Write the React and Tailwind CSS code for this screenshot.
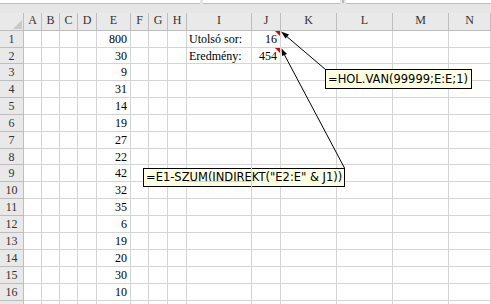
import React from "react";

const cols = ["", "A", "B", "C", "D", "E", "F", "G", "H", "I", "J", "K", "L", "M", "N"];
const eVals = [800, 30, 9, 31, 14, 19, 27, 22, 42, 32, 35, 6, 19, 20, 30, 10];
const gridCols =
  "grid grid-cols-[24px_18px_18px_18px_19px_34px_18px_19px_19px_65px_29px_56px_56px_56px_1fr]";

function Row({ n }) {
  const h = n === 2 || n === 8 ? "h-[16px]" : "h-[17px]";
  const cells = [];
  for (let c = 0; c < cols.length; c++) {
    let content = null;
    let cls = `${h} border-r border-b border-[#d4d4d4] leading-[16px] overflow-visible whitespace-nowrap`;
    if (c === 0) {
      cls = `${h} border-r border-b border-[#bdbdbd] bg-[#e9e9e9] text-[#333] text-center leading-[16px]`;
      content = n;
    } else if (cols[c] === "E") {
      cls += " text-right pr-[3px]";
      content = eVals[n - 1];
    } else if (cols[c] === "I") {
      cls += " pl-[2px] relative z-10";
      if (n === 1) content = "Utolsó sor:";
      if (n === 2) content = "Eredmény:";
    } else if (cols[c] === "J") {
      cls += " text-right pr-[3px]";
      if (n === 1) content = 16;
      if (n === 2) content = 454;
    }
    cells.push(
      <div key={c} className={cls}>
        {content}
      </div>
    );
  }
  return <>{cells}</>;
}

export default function App() {
  return (
    <div className="relative w-[491px] h-[304px] overflow-hidden bg-white text-[12px] text-black font-['Liberation_Serif',serif]">
      {/* formula bar remnant */}
      <div className="h-[13px] bg-[#e6e6e6] flex items-start">
        <div className="w-[200px] h-[4px] bg-white border-b border-[#bcbcbc]" />
        <div className="w-[3px] h-[4px]" />
        <div className="w-[137px] h-[4px] bg-white border-b border-[#bcbcbc]" />
        <div className="w-[6px] h-[4px] flex justify-center">
          <div className="w-[2px] h-[3px] bg-[#bcbcbc]" />
        </div>
        <div className="flex-1 h-[4px] bg-white border-b border-[#bcbcbc]" />
      </div>
      {/* column headers */}
      <div className={gridCols}>
        {cols.map((c, i) => (
          <div
            key={i}
            className="relative h-[18px] bg-[#e9e9e9] border-r border-b border-[#bdbdbd] text-[#333] text-center leading-[14px]"
          >
            {i === 0 ? (
              <svg className="absolute left-[13px] top-[7px]" width="9" height="9" viewBox="0 0 9 9">
                <polygon points="9,0 9,9 0,9" fill="#c9c9c9" />
              </svg>
            ) : (
              c
            )}
          </div>
        ))}
      </div>
      {/* rows */}
      <div className={gridCols}>
        {Array.from({ length: 17 }, (_, i) => i + 1).map((n) =>
          n <= 16 ? (
            <Row key={n} n={n} />
          ) : (
            <React.Fragment key={n}>
              {cols.map((c, i) => (
                <div
                  key={i}
                  className={
                    i === 0
                      ? "h-[17px] border-r border-[#bdbdbd] bg-[#e9e9e9]"
                      : "h-[17px] border-r border-[#d4d4d4]"
                  }
                />
              ))}
            </React.Fragment>
          )
        )}
      </div>

      {/* arrows & indicators */}
      <svg className="absolute left-0 top-0 pointer-events-none" width="491" height="304" viewBox="0 0 491 304">
        <polygon points="275,31 280,31 280,36" fill="#e00000" />
        <polygon points="275,48 280,48 280,53" fill="#e00000" />
        <line x1="325.5" y1="69.5" x2="285" y2="35" stroke="#000" strokeWidth="1" />
        <polygon points="281,31.5 289,34.5 285.5,38.5" fill="#000" />
        <line x1="344.5" y1="168" x2="284" y2="54" stroke="#000" strokeWidth="1" />
        <polygon points="281.5,48.5 287,54 282,56" fill="#000" />
      </svg>

      {/* comments */}
      <div className="absolute left-[325px] top-[69px] w-[147px] h-[20px] bg-[#ffffe1] border border-black pl-[2px] text-[11.5px] leading-[18px] text-black font-['DejaVu_Sans',sans-serif] whitespace-nowrap">
        =HOL.VAN(99999;E:E;1)
      </div>
      <div className="absolute left-[143px] top-[168px] w-[202px] h-[19px] bg-[#ffffe1] border border-black pl-[2px] text-[11.5px] leading-[17px] text-black font-['DejaVu_Sans',sans-serif] whitespace-nowrap">
        =E1-SZUM(INDIREKT("E2:E" &amp; J1))
      </div>
    </div>
  );
}
